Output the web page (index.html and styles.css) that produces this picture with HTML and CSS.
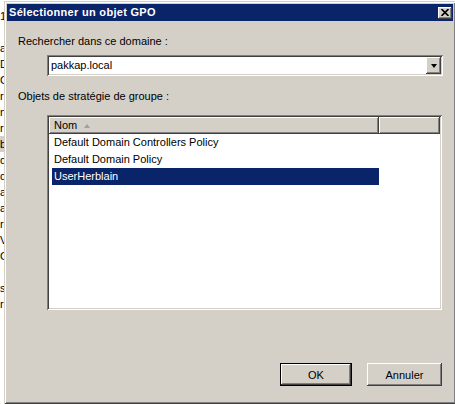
FILE: index.html
```html
<!DOCTYPE html>
<html lang="fr">
<head>
<meta charset="utf-8">
<title>Sélectionner un objet GPO</title>
<link rel="stylesheet" href="styles.css">
</head>
<body>
<div class="behind">
  <div class="bg-line">1</div>
  <div class="bg-line"></div>
  <div class="bg-line">al</div>
  <div class="bg-line">D</div>
  <div class="bg-line">C</div>
  <div class="bg-line">r</div>
  <div class="bg-line">ni</div>
  <div class="bg-line">r</div>
  <div class="bg-line bg-sel">b</div>
  <div class="bg-line">dr</div>
  <div class="bg-line">d</div>
  <div class="bg-line">a</div>
  <div class="bg-line">a</div>
  <div class="bg-line">r</div>
  <div class="bg-line">V</div>
  <div class="bg-line">G</div>
  <div class="bg-line"></div>
  <div class="bg-line">s</div>
  <div class="bg-line">ra</div>
</div>
<div class="window">
  <div class="titlebar">
    <span class="title">Sélectionner un objet GPO</span>
    <span class="close raised">
      <svg width="8" height="7" viewBox="0 0 8 7"><path d="M0.5 0 L7.5 7 M7.5 0 L0.5 7" stroke="#000" stroke-width="1.6"/></svg>
    </span>
  </div>
  <div class="content">
    <div class="label label-first">Rechercher dans ce domaine :</div>
    <div class="combo sunken">
      <span class="combo-text">pakkap.local</span>
      <span class="combo-btn raised"><span class="arrow-down"></span></span>
    </div>
    <div class="label label-second">Objets de stratégie de groupe :</div>
    <div class="list sunken">
      <div class="list-header">
        <div class="hcell hcell-name raised">Nom <span class="sort-up"></span></div>
        <div class="hcell hcell-rest raised"></div>
      </div>
      <div class="row"><span class="row-text">Default Domain Controllers Policy</span></div>
      <div class="row"><span class="row-text">Default Domain Policy</span></div>
      <div class="row"><span class="row-text selected">UserHerblain</span></div>
    </div>
    <div class="buttons">
      <div class="btn btn-default"><div class="btn-inner raised">OK</div></div>
      <div class="btn btn-cancel raised">Annuler</div>
    </div>
  </div>
</div>
</body>
</html>
```
FILE: styles.css
```css
html, body {
  margin: 0;
  padding: 0;
}
body {
  width: 455px;
  height: 404px;
  overflow: hidden;
  display: flex;
  background: #ffffff;
  font-family: "Liberation Sans", Arial, sans-serif;
  font-size: 11px;
  color: #000;
}
.behind {
  width: 4px;
  flex-shrink: 0;
  overflow: hidden;
  padding-top: 8px;
}
.bg-line {
  height: 16px;
  line-height: 16px;
  white-space: nowrap;
}
.bg-sel {
  background: #d4d0c8;
}
.window {
  width: 452px;
  height: 403px;
  margin-top: 1px;
  flex-shrink: 0;
  box-sizing: border-box;
  padding: 3px;
  background: #d4d0c8;
  box-shadow: inset 1px 1px #d4d0c8, inset -1px -1px #404040, inset 2px 2px #ffffff, inset -2px -2px #808080;
  display: flex;
  flex-direction: column;
}
.raised {
  background: #d4d0c8;
  box-shadow: inset -1px -1px #404040, inset 1px 1px #ffffff, inset -2px -2px #808080, inset 2px 2px #d4d0c8;
}
.sunken {
  background: #ffffff;
  box-shadow: inset 1px 1px #808080, inset -1px -1px #ffffff, inset 2px 2px #404040, inset -2px -2px #d4d0c8;
}
.titlebar {
  height: 17px;
  background: #0a246a;
  display: flex;
  align-items: center;
  justify-content: space-between;
  padding: 0 1px 0 2px;
}
.title {
  color: #ffffff;
  font-weight: bold;
  font-size: 11px;
  letter-spacing: 0.3px;
  line-height: 13px;
}
.close {
  width: 14px;
  height: 12px;
  display: flex;
  align-items: center;
  justify-content: center;
}
.close svg {
  display: block;
}
.content {
  flex: 1;
  display: flex;
  flex-direction: column;
  padding: 0 10px 0 11px;
}
.label {
  line-height: 13px;
  height: 13px;
  white-space: nowrap;
}
.label-first {
  margin-top: 14px;
}
.label-second {
  margin-top: 14px;
}
.combo {
  margin: 7px 0 0 29px;
  height: 21px;
  box-sizing: border-box;
  padding: 2px;
  display: flex;
  align-items: center;
}
.combo-text {
  flex: 1;
  padding-left: 2px;
  line-height: 13px;
}
.combo-btn {
  width: 15px;
  height: 17px;
  display: flex;
  align-items: center;
  justify-content: center;
}
.arrow-down {
  width: 0;
  height: 0;
  border-left: 3.5px solid transparent;
  border-right: 3.5px solid transparent;
  border-top: 4px solid #000;
  margin-top: 1px;
}
.list {
  margin: 12px 1px 0 29px;
  height: 195px;
  box-sizing: border-box;
  padding: 2px;
  display: flex;
  flex-direction: column;
}
.list-header {
  display: flex;
  height: 17px;
  flex-shrink: 0;
}
.hcell {
  height: 17px;
  box-sizing: border-box;
  line-height: 17px;
  display: flex;
  align-items: center;
}
.hcell-name {
  width: 330px;
  padding-left: 5px;
}
.hcell-rest {
  flex: 1;
}
.sort-up {
  width: 0;
  height: 0;
  margin-left: 7px;
  border-left: 3.5px solid transparent;
  border-right: 3.5px solid transparent;
  border-bottom: 4px solid #a0a0a0;
}
.row {
  height: 17px;
  display: flex;
  align-items: center;
  padding-left: 3px;
}
.row-text {
  display: block;
  width: 327px;
  height: 17px;
  line-height: 17px;
  box-sizing: border-box;
  padding-left: 2px;
  white-space: nowrap;
}
.selected {
  background: #0a246a;
  color: #ffffff;
}
.buttons {
  margin-top: 53px;
  display: flex;
  justify-content: flex-end;
  gap: 15px;
  padding-right: 1px;
}
.btn {
  height: 23px;
  box-sizing: border-box;
  display: flex;
  align-items: center;
  justify-content: center;
}
.btn-default {
  width: 72px;
  border: 1px solid #000;
}
.btn-inner {
  width: 100%;
  height: 100%;
  display: flex;
  align-items: center;
  justify-content: center;
}
.btn-cancel {
  width: 75px;
}
```
